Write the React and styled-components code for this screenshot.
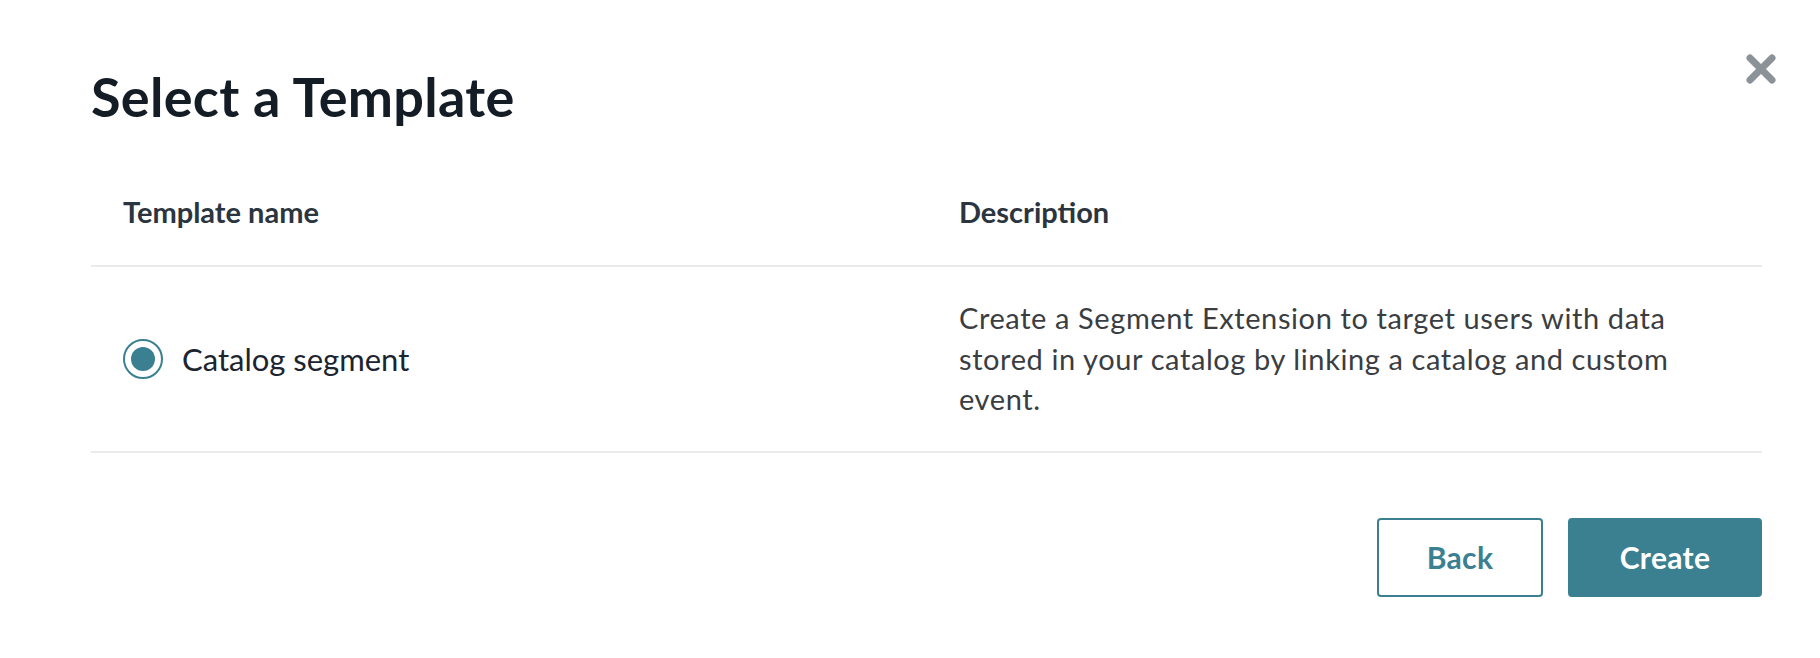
import React, { useState } from "react";
import styled, { createGlobalStyle } from "styled-components";

const GlobalStyle = createGlobalStyle`
  html, body {
    margin: 0;
    padding: 0;
    background: #ffffff;
  }
  body {
    font-family: Lato, "Noto Sans", sans-serif;
    -webkit-font-smoothing: antialiased;
  }
`;

const Modal = styled.div`
  position: relative;
  box-sizing: border-box;
  width: 1820px;
  height: 658px;
  padding: 66px 58px 0 91px;
  background: #ffffff;
`;

const Title = styled.h1`
  margin: 0;
  font-size: 54px;
  line-height: 62px;
  font-weight: 700;
  letter-spacing: 0.3px;
  color: #141c25;
`;

const CloseButton = styled.button`
  position: absolute;
  top: 50px;
  right: 40px;
  width: 38px;
  height: 38px;
  padding: 0;
  border: none;
  background: transparent;
  cursor: pointer;
  display: flex;
  align-items: center;
  justify-content: center;
`;

const Table = styled.div`
  display: grid;
  grid-template-columns: 836px 1fr;
  margin-top: 66px;
`;

const HeadCell = styled.div`
  padding: 0 32px 36px;
  border-bottom: 2px solid #ebebeb;
  font-size: 29px;
  line-height: 35px;
  font-weight: 700;
  color: #2b3540;
`;

const BodyCell = styled.div`
  display: flex;
  align-items: center;
  padding: 31px 32px;
  border-bottom: 2px solid #ebebeb;
`;

const RadioLabel = styled.label`
  display: flex;
  align-items: center;
  gap: 19px;
  font-size: 31px;
  line-height: 36px;
  color: #1b2430;
  cursor: pointer;
`;

const Radio = styled.span`
  box-sizing: border-box;
  width: 40px;
  height: 40px;
  border-radius: 50%;
  border: 2px solid #3b8091;
  display: flex;
  align-items: center;
  justify-content: center;
  &::after {
    content: "";
    width: 24px;
    height: 24px;
    border-radius: 50%;
    background: ${(p) => (p.$checked ? "#3b8091" : "transparent")};
  }
`;

const Description = styled.p`
  margin: 0;
  max-width: 760px;
  font-size: 29px;
  line-height: 40.6px;
  letter-spacing: 0.6px;
  color: #3a3d42;
`;

const Footer = styled.div`
  display: flex;
  justify-content: flex-end;
  gap: 25px;
  margin-top: 65px;
`;

const Button = styled.button`
  box-sizing: border-box;
  height: 79px;
  width: ${(p) => p.$width}px;
  border-radius: 4px;
  border: 2px solid #3b8091;
  background: ${(p) => (p.$primary ? "#3b8091" : "#ffffff")};
  color: ${(p) => (p.$primary ? "#ffffff" : "#3b8091")};
  font-family: Lato, "Noto Sans", sans-serif;
  font-size: 30px;
  font-weight: 700;
  letter-spacing: 0.3px;
  cursor: pointer;
`;

const templates = [
  {
    id: "catalog",
    name: "Catalog segment",
    description:
      "Create a Segment Extension to target users with data stored in your catalog by linking a catalog and custom event.",
  },
];

export default function App() {
  const [selected, setSelected] = useState("catalog");

  return (
    <>
      <GlobalStyle />
      <Modal>
        <Title>Select a Template</Title>
        <CloseButton aria-label="Close">
          <svg width="30" height="30" viewBox="0 0 30 30">
            <path
              d="M4 4 L26 26 M26 4 L4 26"
              stroke="#8b9298"
              strokeWidth="7"
              strokeLinecap="round"
            />
          </svg>
        </CloseButton>
        <Table>
          <HeadCell>Template name</HeadCell>
          <HeadCell>Description</HeadCell>
          {templates.map((t) => (
            <React.Fragment key={t.id}>
              <BodyCell>
                <RadioLabel onClick={() => setSelected(t.id)}>
                  <Radio $checked={selected === t.id} />
                  {t.name}
                </RadioLabel>
              </BodyCell>
              <BodyCell>
                <Description>{t.description}</Description>
              </BodyCell>
            </React.Fragment>
          ))}
        </Table>
        <Footer>
          <Button $width={166}>Back</Button>
          <Button $width={194} $primary>
            Create
          </Button>
        </Footer>
      </Modal>
    </>
  );
}
